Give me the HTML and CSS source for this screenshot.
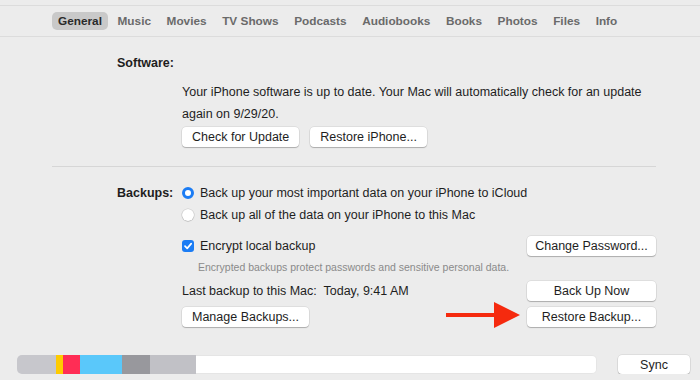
FILE: index.html
```html
<!DOCTYPE html>
<html lang="en">

<head>
    <meta charset="utf-8">
    <title>iPhone - General</title>
    <link rel="stylesheet" href="styles.css">
</head>

<body>
    <nav class="tabs">
        <span class="tab valgt">General</span>
        <span class="tab">Music</span>
        <span class="tab">Movies</span>
        <span class="tab">TV Shows</span>
        <span class="tab">Podcasts</span>
        <span class="tab">Audiobooks</span>
        <span class="tab">Books</span>
        <span class="tab">Photos</span>
        <span class="tab">Files</span>
        <span class="tab">Info</span>
    </nav>

    <main>
        <section class="software">
            <h3 class="label">Software:</h3>
            <div class="indent">
                <p class="text">Your iPhone software is up to date. Your Mac will automatically check for an update again on 9/29/20.</p>
                <div class="knapper">
                    <button class="knap">Check for Update</button>
                    <button class="knap">Restore iPhone...</button>
                </div>
            </div>
        </section>

        <hr class="skille">

        <section class="backups">
            <div class="row first">
                <h3 class="label">Backups:</h3>
                <span class="radio on"></span>
                <span class="text">Back up your most important data on your iPhone to iCloud</span>
            </div>
            <div class="row indent">
                <span class="radio"></span>
                <span class="text">Back up all of the data on your iPhone to this Mac</span>
            </div>

            <div class="row indent split encrypt">
                <div class="row">
                    <span class="check">
                        <svg width="12" height="12" viewBox="0 0 12 12"><path d="M3 6.2 L5.2 8.4 L9.2 3.6" fill="none" stroke="#fff" stroke-width="1.7" stroke-linecap="round" stroke-linejoin="round"/></svg>
                    </span>
                    <span class="text">Encrypt local backup</span>
                </div>
                <button class="knap bred">Change Password...</button>
            </div>
            <p class="indent note">Encrypted backups protect passwords and sensitive personal data.</p>

            <div class="row indent split last">
                <span class="text">Last backup to this Mac:&nbsp; Today, 9:41 AM</span>
                <button class="knap bred">Back Up Now</button>
            </div>
            <div class="row indent split manage">
                <button class="knap">Manage Backups...</button>
                <button class="knap bred">Restore Backup...</button>
            </div>

            <svg class="pil" width="76" height="28" viewBox="0 0 76 28">
                <line x1="0" y1="14" x2="52" y2="14" stroke="#f52a0e" stroke-width="4"/>
                <polygon points="48,1 74,14 48,27" fill="#f52a0e"/>
            </svg>
        </section>
    </main>

    <footer>
        <div class="lager">
            <span class="seg" style="width:39px;background:#c7c7cc"></span>
            <span class="seg" style="width:7px;background:#fecb00"></span>
            <span class="seg" style="width:17px;background:#ff2d55"></span>
            <span class="seg" style="width:42px;background:#5ac8fa"></span>
            <span class="seg" style="width:28px;background:#98989d"></span>
            <span class="seg" style="width:46px;background:#c1c1c6"></span>
        </div>
        <button class="knap sync">Sync</button>
    </footer>
</body>

</html>
```

FILE: styles.css
```css
* {
    margin: 0;
    box-sizing: border-box;
}

body {
    background-color: #ececec;
    font-family: 'Liberation Sans', Arial, sans-serif;
    font-size: 12.5px;
    color: #1e1e1e;
    padding-top: 5px;
}

.tabs {
    display: flex;
    align-items: center;
    height: 32px;
    padding-left: 52px;
    gap: 3.6px;
    border-top: 1px solid #dcdcdc;
    border-bottom: 1px solid #dcdcdc;
}

.tab {
    font-weight: bold;
    font-size: 11.8px;
    color: #6a6a6a;
    padding: 2px 6px;
    border-radius: 5px;
}

.valgt {
    color: #2a2a2a;
    background-color: #c9c9c9;
}

main {
    position: relative;
}

.label {
    font-size: 12.5px;
    font-weight: bold;
    width: 65px;
    flex-shrink: 0;
}

.software {
    padding: 15px 0 0 117px;
}

.software .label {
    line-height: 22px;
}

.indent {
    margin-left: 65px;
}

.software .indent {
    margin-top: 7px;
    width: 470px;
}

.software .text {
    line-height: 22px;
}

.knapper {
    display: flex;
    gap: 11px;
    margin-top: 2px;
}

.knap {
    font-family: 'Liberation Sans', Arial, sans-serif;
    font-size: 12.5px;
    color: #1e1e1e;
    height: 20px;
    padding: 0 10px;
    background-color: #fff;
    border: 0;
    border-radius: 4px;
    white-space: nowrap;
    box-shadow: 0 0 0 0.5px rgba(0, 0, 0, 0.12), 0 1px 1px rgba(0, 0, 0, 0.22);
}

.bred {
    width: 129px;
    padding: 0;
}

.skille {
    border: 0;
    border-top: 1px solid #d6d6d6;
    margin: 19px 44px 0 52px;
}

.backups {
    padding: 15px 0 0 117px;
    width: 656px;
}

.row {
    display: flex;
    align-items: center;
    height: 22px;
}

.split {
    justify-content: space-between;
}

.radio {
    width: 12px;
    height: 12px;
    border-radius: 50%;
    background-color: #fff;
    box-shadow: 0 0 0 0.5px rgba(0, 0, 0, 0.15), 0 0.5px 1px rgba(0, 0, 0, 0.2);
    margin-right: 6px;
    flex-shrink: 0;
}

.radio.on {
    background-color: #fff;
    border: 3.5px solid #1b7cf4;
    box-shadow: none;
}

.check {
    width: 12px;
    height: 12px;
    border-radius: 3px;
    background-color: #1b7cf4;
    margin-right: 6px;
    display: flex;
}

.encrypt {
    margin-top: 9px;
}

.note {
    font-size: 10.5px;
    color: #8a8a8a;
    line-height: 16px;
    margin-top: 2px;
    padding-left: 16px;
}

.last {
    margin-top: 5px;
}

.manage {
    margin-top: 4px;
}

.pil {
    position: absolute;
    left: 446px;
    top: 264px;
}

footer {
    display: flex;
    align-items: center;
    justify-content: space-between;
    padding: 0 10px 0 17px;
    margin-top: 27px;
}

.lager {
    display: flex;
    width: 580px;
    height: 19px;
    background-color: #fff;
    border-radius: 5px;
    overflow: hidden;
    box-shadow: inset 0 0 0 1px rgba(0, 0, 0, 0.1);
}

.seg {
    height: 100%;
}

.sync {
    width: 72px;
    height: 19px;
}
```
